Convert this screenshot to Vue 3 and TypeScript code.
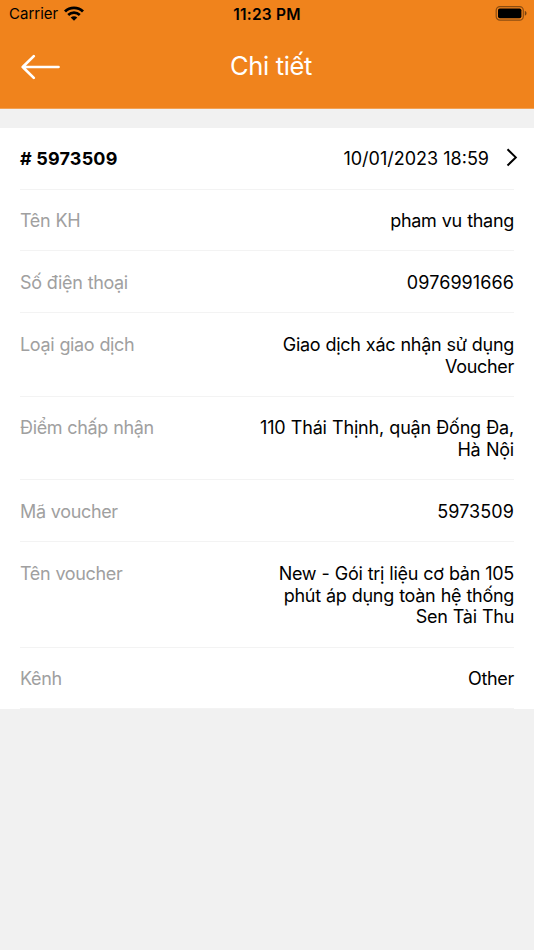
<script setup lang="ts">
interface DetailRow {
  label: string
  lines: string[]
  tone?: 'numeric' | 'address'
}

const rows: DetailRow[] = [
  { label: 'Tên KH', lines: ['pham vu thang'] },
  { label: 'Số điện thoại', lines: ['0976991666'], tone: 'numeric' },
  { label: 'Loại giao dịch', lines: ['Giao dịch xác nhận sử dụng', 'Voucher'] },
  { label: 'Điểm chấp nhận', lines: ['110 Thái Thịnh, quận Đống Đa,', 'Hà Nội'], tone: 'address' },
  { label: 'Mã voucher', lines: ['5973509'], tone: 'numeric' },
  { label: 'Tên voucher', lines: ['New - Gói trị liệu cơ bản 105', 'phút áp dụng toàn hệ thống', 'Sen Tài Thu'] },
  { label: 'Kênh', lines: ['Other'] },
]
</script>

<template>
  <main class="screen">
    <header class="header">
      <div class="status">
        <div class="network">
          <span class="carrier">Carrier</span>
          <svg class="wifi" width="20" height="15" viewBox="0 0 20 15" aria-hidden="true">
            <path d="M1 5.5C5.9 .7 14.1 .7 19 5.5" fill="none" stroke="#000" stroke-width="2.9" />
            <path d="M4.2 8.9C7.5 5.8 12.5 5.8 15.8 8.9" fill="none" stroke="#000" stroke-width="2.7" />
            <path d="M6.7 11.5C8.6 9.7 11.4 9.7 13.3 11.5L10 14.8Z" fill="#000" />
          </svg>
        </div>
        <time class="clock">11:23 PM</time>
        <svg class="battery" width="32" height="15" viewBox="0 0 32 15" aria-hidden="true">
          <rect x=".2" y=".6" width="27.1" height="13.5" rx="3.7" fill="none" stroke="#000" stroke-opacity=".42" stroke-width="1.2" />
          <rect x="2" y="2.4" width="23.4" height="9.9" rx="1.8" fill="#000" />
          <path d="M28.8 5.1C31.1 5.7 31.1 9 28.8 9.7Z" fill="#000" fill-opacity=".5" />
        </svg>
      </div>
      <nav class="navbar">
        <button class="back" type="button" aria-label="Quay lại">
          <svg width="40" height="26" viewBox="0 0 40 26" aria-hidden="true">
            <path d="M13.8 2.1L2.7 13L13.8 23.9M2.7 13H38.5" fill="none" stroke="#fff" stroke-width="2.7" stroke-linecap="round" stroke-linejoin="round" />
          </svg>
        </button>
        <h1 class="title">Chi tiết</h1>
      </nav>
    </header>

    <section class="card">
      <div class="row summary">
        <strong class="code"># 5973509</strong>
        <div class="date">
          <span>10/01/2023 18:59</span>
          <svg class="chevron" width="12" height="20" viewBox="0 0 12 20" aria-hidden="true">
            <path d="M1.5 1.3L9.8 9.4L1.5 17.5" fill="none" stroke="#000" stroke-width="2" />
          </svg>
        </div>
      </div>
      <div v-for="row in rows" :key="row.label" class="row">
        <span class="label">{{ row.label }}</span>
        <div class="value" :class="row.tone">
          <div v-for="line in row.lines" :key="line">{{ line }}</div>
        </div>
      </div>
    </section>
  </main>
</template>

<style>
body {
  background: #f1f1f1;
}
</style>

<style scoped>
.screen {
  min-height: 950px;
  background: #f1f1f1;
  color: #000;
  font-family: Inter, "Noto Sans", sans-serif;
}

.header {
  box-sizing: border-box;
  height: 109px;
  background: #f0831c;
  border-bottom: 1px solid #f2a153;
}

.status {
  display: grid;
  grid-template-columns: 1fr auto 1fr;
  align-items: center;
  height: 28px;
  padding: 0 6px 0 9px;
  font-size: 15px;
}

.network {
  display: flex;
  align-items: center;
  gap: 6px;
}

.carrier {
  margin-bottom: 2px;
}

.wifi {
  margin-bottom: 2px;
}

.clock {
  margin-right: 3px;
  font-size: 15.5px;
  font-weight: 600;
  letter-spacing: 0.2px;
}

.battery {
  justify-self: end;
  margin-bottom: 2px;
  overflow: visible;
}

.navbar {
  display: grid;
  grid-template-columns: 60px 1fr 60px;
  align-items: center;
  height: 78px;
}

.back {
  display: flex;
  padding: 0 0 0 20px;
  border: 0;
  background: none;
}

.title {
  margin: -4px 0 0;
  padding-left: 8px;
  color: #fff;
  font-size: 25.5px;
  font-weight: 400;
  letter-spacing: -0.35px;
  text-align: center;
}

.card {
  margin-top: 19px;
  padding: 0 20px;
  background: #fff;
}

.row {
  display: flex;
  justify-content: space-between;
  padding: 20.5px 0 18.5px;
  border-bottom: 1px solid #f3f3f3;
  font-size: 18px;
  line-height: 21.8px;
}

.summary {
  padding: 19.6px 0 19.3px;
}

.code {
  font-weight: 700;
  letter-spacing: 0.18px;
}

.date {
  display: flex;
  align-items: center;
  gap: 17px;
  margin-right: -4px;
}

.label {
  color: #a0a0a0;
  letter-spacing: -0.36px;
  word-spacing: 0.5px;
}

.value {
  letter-spacing: -0.3px;
  word-spacing: 0.5px;
  text-align: right;
  white-space: nowrap;
}

.numeric {
  letter-spacing: 0.08px;
}

.address {
  letter-spacing: -0.2px;
}
</style>
